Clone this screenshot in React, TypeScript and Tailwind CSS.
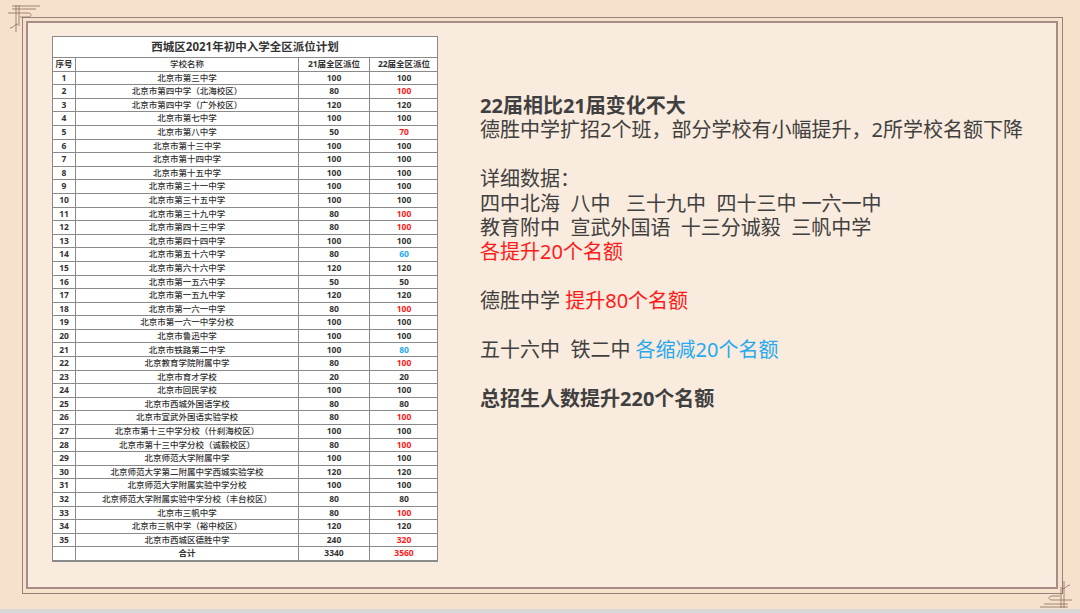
import React from "react";

type R = [string, number, number, string?];
const rows: R[] = [
  ["北京市第三中学", 100, 100],
  ["北京市第四中学（北海校区）", 80, 100, "r"],
  ["北京市第四中学（广外校区）", 120, 120],
  ["北京市第七中学", 100, 100],
  ["北京市第八中学", 50, 70, "r"],
  ["北京市第十三中学", 100, 100],
  ["北京市第十四中学", 100, 100],
  ["北京市第十五中学", 100, 100],
  ["北京市第三十一中学", 100, 100],
  ["北京市第三十五中学", 100, 100],
  ["北京市第三十九中学", 80, 100, "r"],
  ["北京市第四十三中学", 80, 100, "r"],
  ["北京市第四十四中学", 100, 100],
  ["北京市第五十六中学", 80, 60, "b"],
  ["北京市第六十六中学", 120, 120],
  ["北京市第一五六中学", 50, 50],
  ["北京市第一五九中学", 120, 120],
  ["北京市第一六一中学", 80, 100, "r"],
  ["北京市第一六一中学分校", 100, 100],
  ["北京市鲁迅中学", 100, 100],
  ["北京市铁路第二中学", 100, 80, "b"],
  ["北京教育学院附属中学", 80, 100, "r"],
  ["北京市育才学校", 20, 20],
  ["北京市回民学校", 100, 100],
  ["北京市西城外国语学校", 80, 80],
  ["北京市宣武外国语实验学校", 80, 100, "r"],
  ["北京市第十三中学分校（什刹海校区）", 100, 100],
  ["北京市第十三中学分校（诚毅校区）", 80, 100, "r"],
  ["北京师范大学附属中学", 100, 100],
  ["北京师范大学第二附属中学西城实验学校", 120, 120],
  ["北京师范大学附属实验中学分校", 100, 100],
  ["北京师范大学附属实验中学分校（丰台校区）", 80, 80],
  ["北京市三帆中学", 80, 100, "r"],
  ["北京市三帆中学（裕中校区）", 120, 120],
  ["北京市西城区德胜中学", 240, 320, "r"],
];

const cell = "border-r border-[#8a8a8a] flex items-center justify-center";

function Row({ a, b, c, d, color, bold }: { a: string; b: string; c: string; d: string; color?: string; bold?: boolean }) {
  return (
    <div className="grid grid-cols-[23px_223px_71px_68px] h-[13.6px] border-b border-[#8a8a8a] text-[8.5px] leading-none">
      <div className={cell + " font-bold"}>{a}</div>
      <div className={cell + (bold ? " font-bold" : " font-medium")}>{b}</div>
      <div className={cell + " font-bold"}>{c}</div>
      <div className={"flex items-center justify-center font-bold " + (color || "")}>{d}</div>
    </div>
  );
}

function Corner({ cls }: { cls: string }) {
  return (
    <svg className={"absolute " + cls} width="36" height="30" viewBox="0 0 36 30" fill="none" stroke="#8b6b60" strokeWidth="0.8">
      <path d="M6 2 H34 M6 5 H30 M10 1 V28 M13 1 V22 M2 9 H22 C26 9 26 13 22 13 H14 M4 24 C8 24 8 20 12 20" />
    </svg>
  );
}

export default function App() {
  return (
    <div className="w-[1080px] h-[613px] bg-[#f6e2cc] relative overflow-hidden" style={{ fontFamily: '"Noto Sans", "Noto Sans CJK SC", sans-serif' }}>
      <div className="absolute left-[22px] top-[17px] w-[1041px] h-[577px] border border-[#9a7f78]" />
      <div className="absolute left-[26px] top-[21px] w-[1032px] h-[568px] border-2 border-[#a88c85] bg-[#f9ebdd]" />
      <Corner cls="left-[6px] top-[4px]" />
      <Corner cls="right-[6px] bottom-[4px] rotate-180" />
      <div className="absolute left-0 right-0 bottom-0 h-[4px] bg-[#d8d8d8]" />
      <div className="relative flex pt-[36px] pl-[52px]">
        <div className="w-[386px] bg-white border border-[#8a8a8a] text-[#333]">
          <div className="h-[21px] border-b border-[#8a8a8a] flex items-center justify-center text-[11.5px] font-bold">西城区2021年初中入学全区派位计划</div>
          <Row a="序号" b="学校名称" c="21届全区派位" d="22届全区派位" />
          {rows.map((r, i) => (
            <Row key={i} a={String(i + 1)} b={r[0]} c={String(r[1])} d={String(r[2])} color={r[3] === "r" ? "text-[#ff1a1a]" : r[3] === "b" ? "text-[#26a9f0]" : ""} />
          ))}
          <Row a="" b="合计" c="3340" d="3560" color="text-[#ff1a1a]" bold />
        </div>
        <div className="ml-[42px] mt-[58px] text-[20px] leading-[24.4px] text-[#404040]">
          <div className="font-bold">22届相比21届变化不大</div>
          <div>德胜中学扩招2个班，部分学校有小幅提升，2所学校名额下降</div>
          <div className="h-[24.4px]" />
          <div>详细数据：</div>
          <div className="whitespace-pre">四中北海  八中   三十九中  四十三中 一六一中</div>
          <div className="whitespace-pre">教育附中  宣武外国语  十三分诚毅  三帆中学</div>
          <div className="text-[#ff1a1a]">各提升20个名额</div>
          <div className="h-[24.4px]" />
          <div>德胜中学 <span className="text-[#ff1a1a]">提升80个名额</span></div>
          <div className="h-[24.4px]" />
          <div className="whitespace-pre">五十六中  铁二中 <span className="text-[#26a9f0]">各缩减20个名额</span></div>
          <div className="h-[24.4px]" />
          <div className="font-bold">总招生人数提升220个名额</div>
        </div>
      </div>
    </div>
  );
}
